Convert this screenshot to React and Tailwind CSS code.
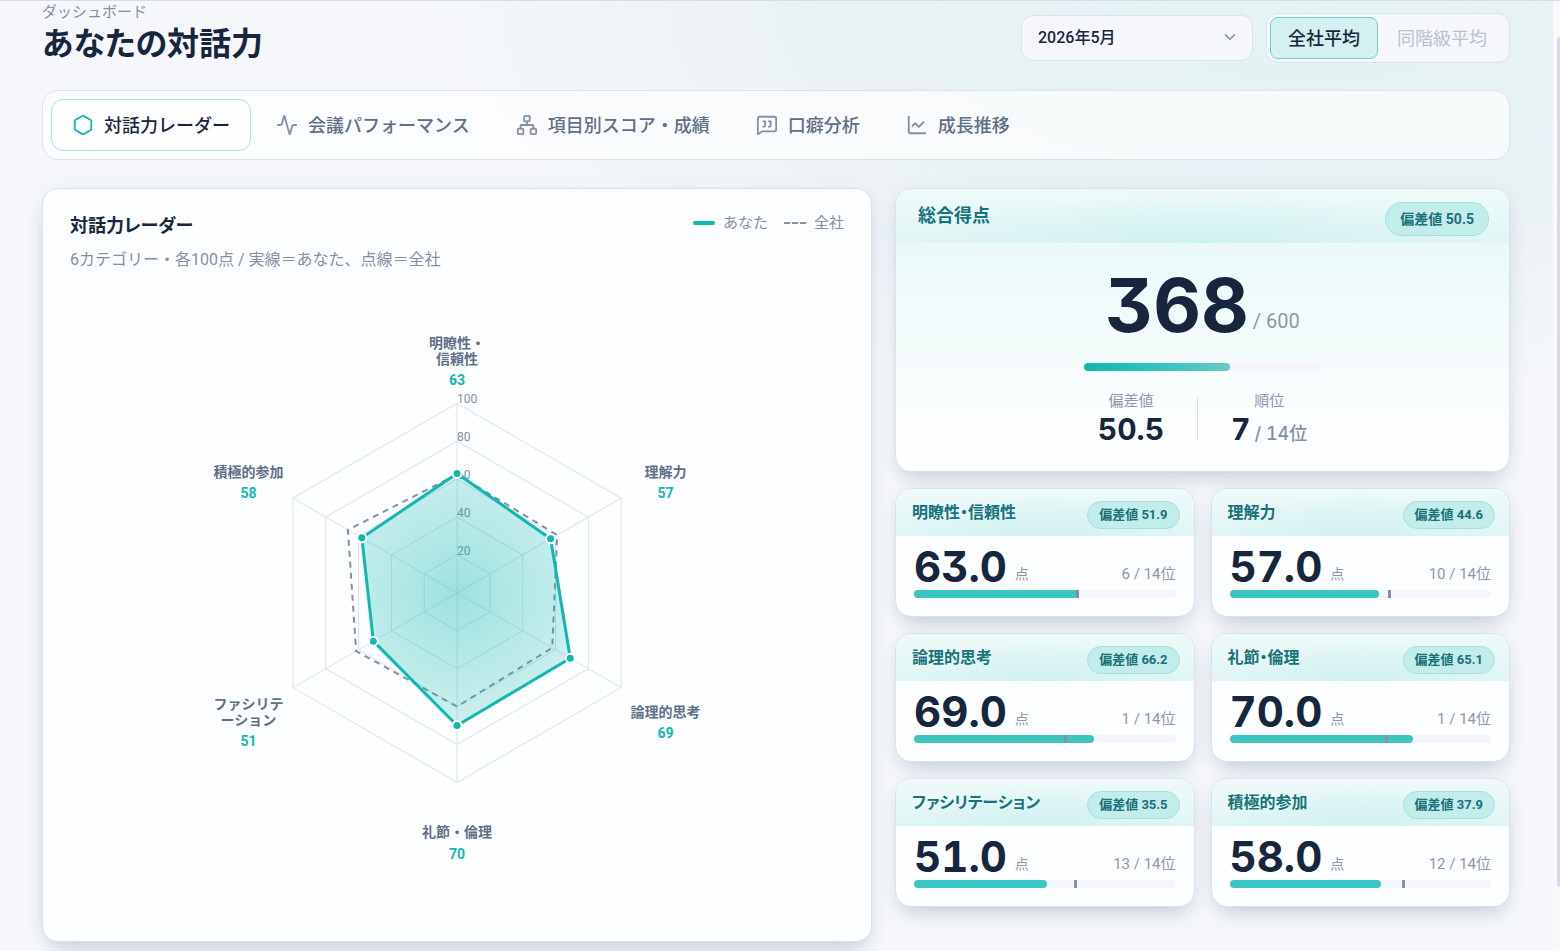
import { useState } from "react";
import { Activity, ChartLine, ChevronDown, Hexagon, MessageSquareQuote, Network } from "lucide-react";

const TABS = [
  { label: "対話力レーダー", Icon: Hexagon },
  { label: "会議パフォーマンス", Icon: Activity },
  { label: "項目別スコア・成績", Icon: Network },
  { label: "口癖分析", Icon: MessageSquareQuote },
  { label: "成長推移", Icon: ChartLine },
];

const CATEGORIES = [
  { name: "明瞭性・信頼性", lines: ["明瞭性・", "信頼性"], score: 63, company: 62.5, deviation: "51.9", rank: 6, x: 386, y: 64 },
  { name: "理解力", lines: ["理解力"], score: 57, company: 61, deviation: "44.6", rank: 10, x: 594, y: 192 },
  { name: "論理的思考", lines: ["論理的思考"], score: 69, company: 58, deviation: "66.2", rank: 1, x: 594, y: 432 },
  { name: "礼節・倫理", lines: ["礼節・倫理"], score: 70, company: 60, deviation: "65.1", rank: 1, x: 386, y: 552 },
  { name: "ファシリテーション", lines: ["ファシリテ", "ーション"], score: 51, company: 61.5, deviation: "35.5", rank: 13, x: 178, y: 424 },
  { name: "積極的参加", lines: ["積極的参加"], score: 58, company: 66.5, deviation: "37.9", rank: 12, x: 178, y: 192 },
];

const CX = 386;
const CY = 308;
const RADIUS = 189;

function vertex(index, value) {
  const angle = (Math.PI / 3) * index - Math.PI / 2;
  const r = (RADIUS * value) / 100;
  return [CX + r * Math.cos(angle), CY + r * Math.sin(angle)];
}

const polygon = (values) => values.map((v, i) => vertex(i, v).join(",")).join(" ");

function Radar() {
  const mine = CATEGORIES.map((c) => c.score);
  const company = CATEGORIES.map((c) => c.company);
  return (
    <svg viewBox="0 0 772 626" className="block w-full" role="img" aria-label="対話力レーダー">
      <defs>
        <radialGradient id="area" gradientUnits="userSpaceOnUse" cx={CX} cy={CY} r="150">
          <stop offset="0" stopColor="#0fb8b0" stopOpacity="0.4" />
          <stop offset="1" stopColor="#0fb8b0" stopOpacity="0.18" />
        </radialGradient>
      </defs>
      <g fill="none" stroke="#dbe2ec" strokeWidth="1">
        {[20, 40, 60, 80, 100].map((level) => (
          <polygon key={level} points={polygon([level, level, level, level, level, level])} />
        ))}
        {CATEGORIES.map((c, i) => {
          const [x, y] = vertex(i, 100);
          return <line key={c.name} x1={CX} y1={CY} x2={x} y2={y} />;
        })}
      </g>
      <g className="fill-[#8490a3] text-[12px]">
        {[20, 40, 60, 80, 100].map((level) => (
          <text key={level} x={CX} y={CY - (RADIUS * level) / 100}>{level}</text>
        ))}
      </g>
      <polygon points={polygon(company)} fill="none" stroke="#8490a3" strokeWidth="2" strokeDasharray="6 5" />
      <polygon points={polygon(mine)} fill="url(#area)" stroke="#0fb8b0" strokeWidth="3" strokeLinejoin="round" />
      {mine.map((v, i) => {
        const [x, y] = vertex(i, v);
        return <circle key={i} cx={x} cy={y} r="4.5" fill="#0fb8b0" stroke="#ffffff" strokeWidth="2" />;
      })}
      {CATEGORIES.map((c) => (
        <text key={c.name} textAnchor="middle" y={c.y} className="fill-[#5f6f86] text-[14px] font-bold">
          {c.lines.map((line, i) => (
            <tspan key={line} x={c.x} dy={i === 0 ? 0 : 16}>{line}</tspan>
          ))}
          <tspan x={c.x} dy="21" className="fill-[#0fb8b0]">{c.score}</tspan>
        </text>
      ))}
    </svg>
  );
}

const CARD = "overflow-hidden rounded-2xl border border-[#d9e1eb] bg-[#fdfeff] shadow-[0_12px_20px_-8px_rgba(71,95,130,0.26),0_2px_18px_rgba(71,95,130,0.07)]";
const CARD_HEAD = "flex items-start justify-between bg-[radial-gradient(ellipse_at_bottom,#d0f1f0_0%,transparent_65%),linear-gradient(#effafa,#e0f5f5)]";
const PILL = "flex items-center rounded-full border border-[#a5e0de] bg-[#c2edeb] font-bold text-[#1a6f78]";
const FIGURE = "font-['Inter','Noto_Sans_CJK_JP',sans-serif] tabular-nums [font-feature-settings:'cv09']";

function CategoryCard({ item }) {
  return (
    <article className={CARD}>
      <header className={`${CARD_HEAD} h-[47px] pt-3 pr-3.5 pl-4`}>
        <h3 className="text-[16px] leading-6 font-bold text-[#17737a] [font-feature-settings:'palt']">{item.name}</h3>
        <span className={`${PILL} h-7 px-[11px] text-[13px]`}>偏差値 {item.deviation}</span>
      </header>
      <div className="px-[18px] pt-2 pb-[18px]">
        <div className="flex items-end justify-between">
          <p className="flex items-end gap-2">
            <span className={`${FIGURE} text-[42px] leading-[46px] font-bold text-[#17263c]`}>{item.score.toFixed(1)}</span>
            <span className="pb-1 text-[14px] leading-6 text-[#8b98ab]">点</span>
          </p>
          <p className="pb-1 text-[15px] leading-6 text-[#8b98ab]">{item.rank} / 14位</p>
        </div>
        <div className="relative h-2 rounded-full bg-[#f4f6fb]">
          <div className="h-2 rounded-full bg-[#3bc6c3]" style={{ width: `${item.score}%` }} />
          <span className="absolute inset-y-0 w-[3px] bg-[#8490a3]" style={{ left: `${item.company - 0.5}%` }} />
        </div>
      </div>
    </article>
  );
}

export default function App() {
  const [tab, setTab] = useState(0);
  const [scope, setScope] = useState("company");
  return (
    <div className="flex min-h-screen border-t border-[#d5deea] bg-[#f5f7fb] bg-[radial-gradient(ellipse_900px_400px_at_84%_0px,#e3f3f4_0%,#e9f1f5_50%,transparent_100%)] font-['Roboto','Noto_Sans_CJK_JP',sans-serif] text-[#17263c]">
      <main className="min-w-0 flex-1 pr-[43px] pb-2.5 pl-[42px]">
        <header className="flex items-start justify-between">
          <div>
            <p className="text-[15px] leading-[22px] text-[#8490a3]">ダッシュボード</p>
            <h1 className="text-[32px] leading-[42px] font-bold [font-feature-settings:'palt']">あなたの対話力</h1>
          </div>
          <div className="flex items-center gap-[13px] pt-3">
            <div className="relative">
              <select aria-label="対象月" className="h-[46px] w-[232px] appearance-none rounded-xl border border-[#dbe2ec] bg-[#f5f7fb] px-4 text-[16px] font-medium">
                <option>2026年5月</option>
                <option>2026年4月</option>
              </select>
              <ChevronDown className="pointer-events-none absolute top-[13px] right-3.5 size-[18px] text-[#8490a3]" />
            </div>
            <div className="flex rounded-xl border border-[#dbe2ec] bg-[#f5f7fb] p-[3px] text-[18px]">
              <button type="button" aria-pressed={scope === "company"} onClick={() => setScope("company")} className="h-[42px] rounded-lg border border-[#74cfcc] bg-[#d3f1f0] px-[17px] font-medium">全社平均</button>
              <button type="button" disabled className="h-[42px] px-[19px] text-[#b9c2cf]">同階級平均</button>
            </div>
          </div>
        </header>

        <nav className="mt-[25px] flex gap-1 rounded-2xl border border-[#dbe2ec] bg-white/70 p-2">
          {TABS.map(({ label, Icon }, i) => (
            <button
              key={label}
              type="button"
              onClick={() => setTab(i)}
              className={`flex h-[52px] items-center gap-2.5 rounded-xl border px-5 text-[18px] font-medium ${
                i === tab ? "border-[#a5e3e0] bg-white/60 text-[#17263c]" : "border-transparent text-[#5f6f86]"
              }`}
            >
              <Icon className={`size-[22px] ${i === tab ? "text-[#0fb8b0]" : "text-[#8490a3]"}`} strokeWidth={2} />
              {label}
            </button>
          ))}
        </nav>

        <div className="mt-7 grid grid-cols-[1.35fr_1fr] items-start gap-[23px]">
          <section className={`${CARD} px-[27px] pt-[25px] pb-[29px]`}>
            <div className="flex items-start justify-between">
              <h2 className="text-[18px] leading-6 font-bold [font-feature-settings:'palt']">対話力レーダー</h2>
              <div className="flex items-center gap-4 text-[15px] leading-[18px] text-[#8490a3]">
                <span className="flex items-center gap-2"><i className="h-1 w-[22px] rounded-sm bg-[#0fb8b0]" />あなた</span>
                <span className="flex items-center gap-2">
                  <svg width="22" height="2"><path d="M0 1h22" stroke="#8490a3" strokeWidth="2" strokeDasharray="6 2" /></svg>
                  全社
                </span>
              </div>
            </div>
            <p className="mt-2.5 text-[16px] leading-6 text-[#8490a3]">6カテゴリー・各100点 / 実線＝あなた、点線＝全社</p>
            <div className="mt-3"><Radar /></div>
          </section>

          <div className="flex flex-col gap-4">
            <section className={`${CARD} bg-[linear-gradient(#e6f8f7,#fdfeff_90%)]`}>
              <header className={`${CARD_HEAD} h-[54px] pt-[13px] pr-5 pl-[22px]`}>
                <h2 className="text-[18px] leading-7 font-bold text-[#17737a] [font-feature-settings:'palt']">総合得点</h2>
                <span className={`${PILL} h-[34px] px-3.5 text-[14px]`}>偏差値 50.5</span>
              </header>
              <div className="flex flex-col items-center pt-[22px] pb-6">
                <p className="flex items-end gap-1">
                  <span className={`${FIGURE} text-[74px] leading-[80px] font-bold`}>368</span>
                  <span className="pb-3 text-[20px] leading-6 text-[#8b98ab]">/ 600</span>
                </p>
                <div className="mt-[18px] h-2 w-[238px] rounded-full bg-[#f6f6fa]">
                  <div className="h-2 rounded-full bg-[linear-gradient(90deg,#0fb8b0,#3bc6c3_60%,#6cc9c4)]" style={{ width: `${(368 / 600) * 100}%` }} />
                </div>
                <dl className="mt-5 flex">
                  <div className="flex flex-col items-center px-[33px]">
                    <dt className="text-[15px] leading-5 text-[#8b98ab]">偏差値</dt>
                    <dd className={`${FIGURE} text-[30px] leading-9 font-bold`}>50.5</dd>
                  </div>
                  <div className="my-1.5 w-px bg-[#dbe2ec]" />
                  <div className="flex flex-col items-center px-[33px]">
                    <dt className="text-[15px] leading-5 text-[#8b98ab]">順位</dt>
                    <dd className={`${FIGURE} flex items-baseline gap-1 text-[30px] leading-9 font-bold`}>
                      7<span className="text-[18px] leading-6 font-medium text-[#8490a3]">/ 14位</span>
                    </dd>
                  </div>
                </dl>
              </div>
            </section>
            <div className="grid grid-cols-2 gap-4">
              {CATEGORIES.map((item) => <CategoryCard key={item.name} item={item} />)}
            </div>
          </div>
        </div>
      </main>
      <div aria-hidden="true" className="w-[7px] bg-[#f8fafc] pt-9 pl-1">
        <div className="h-[850px] rounded-l-full bg-[#d5dce7]" />
      </div>
    </div>
  );
}
